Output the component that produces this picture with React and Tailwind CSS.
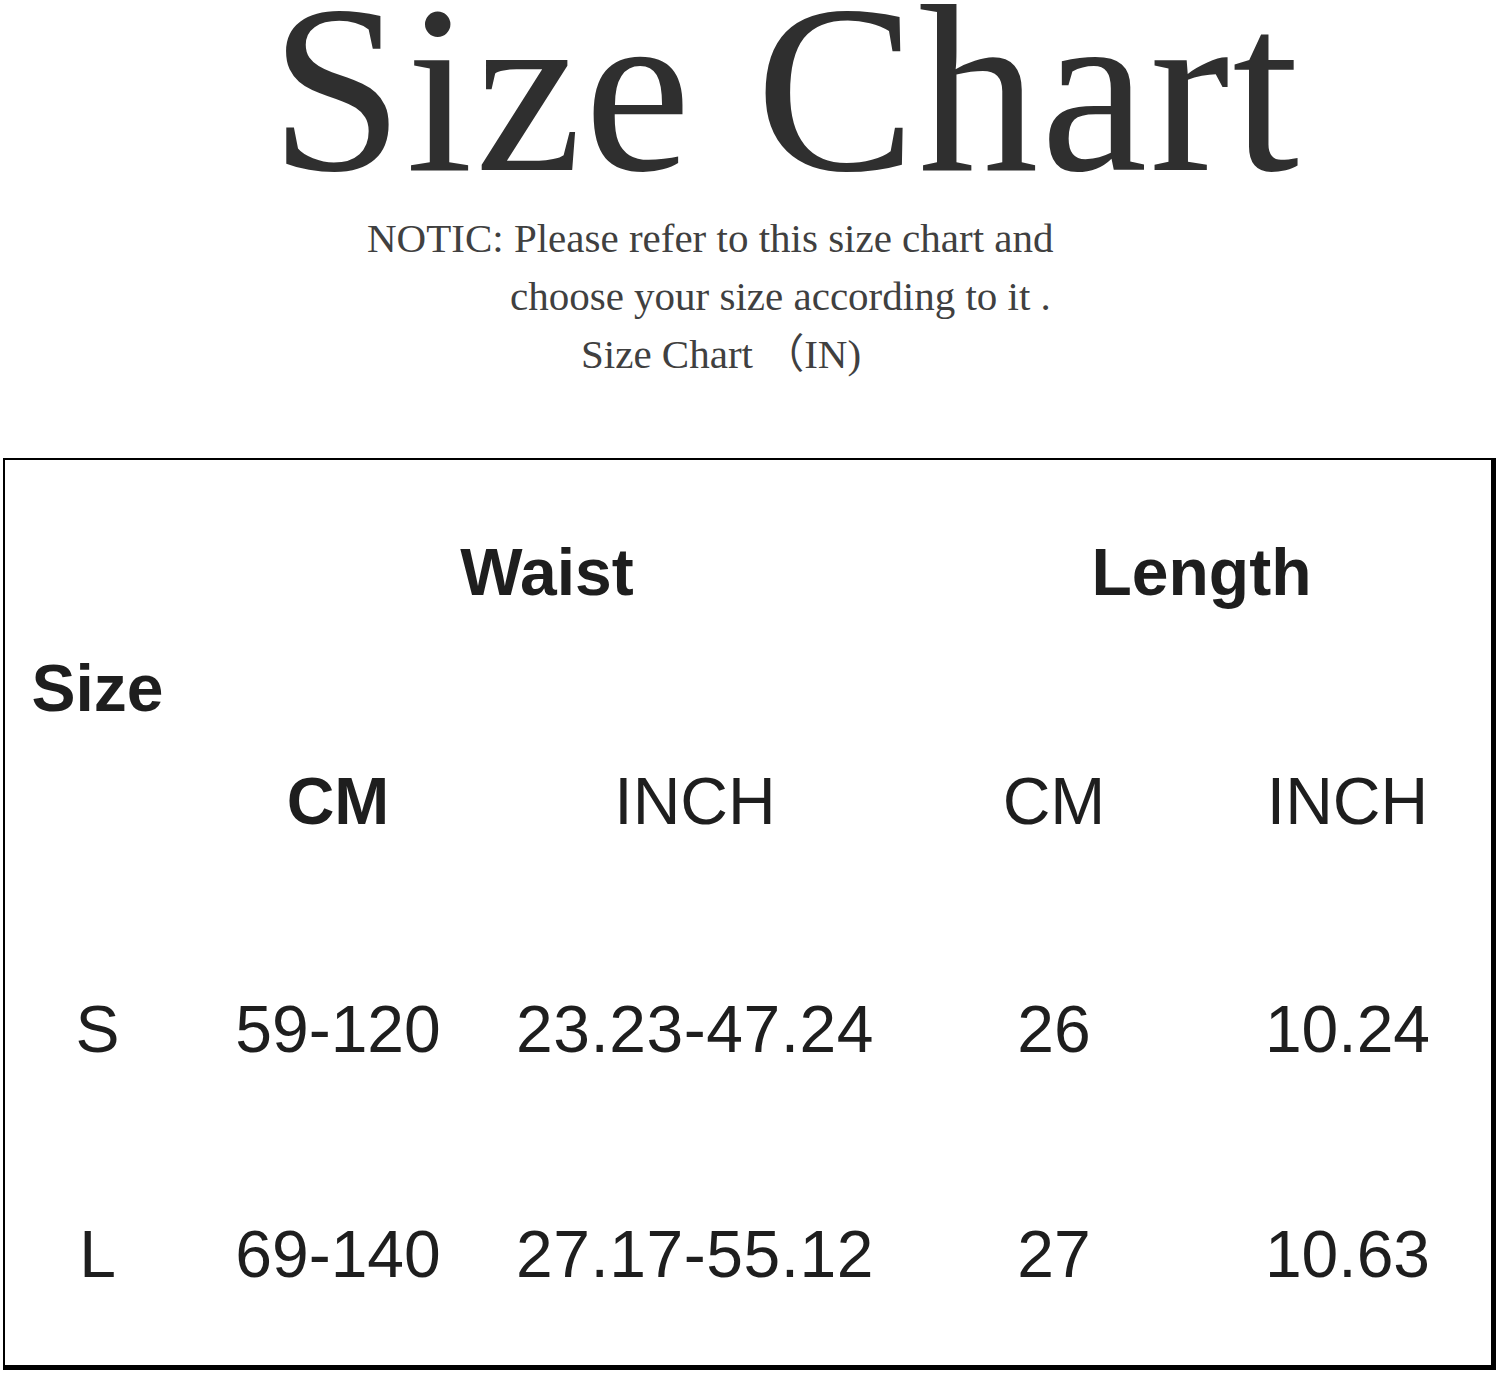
const serif = { fontFamily: '"Liberation Serif", "Noto Sans CJK SC", serif' };

const rows = [
  { size: 'S', waistCm: '59-120', waistIn: '23.23-47.24', lenCm: '26', lenIn: '10.24' },
  { size: 'L', waistCm: '69-140', waistIn: '27.17-55.12', lenCm: '27', lenIn: '10.63' },
];

const Cell = ({ children, className = '' }) => (
  <div className={`flex items-center justify-center ${className}`}>{children}</div>
);

const App = () => {
  return (
    <div className="w-[1500px] h-[1375px] bg-white overflow-hidden">
      {/* heading */}
      <div className="font-['Liberation_Serif',serif]">
        <div className="pl-[270px] text-[240px] leading-[178px] text-[#2f2f2f] whitespace-nowrap tracking-[2.5px]">
          Size Chart
        </div>
        <div className="mt-[31px] text-[41px] leading-[58px] text-[#404040] whitespace-nowrap">
          <div className="pl-[367px]">NOTIC: Please refer to this size chart and</div>
          <div className="pl-[510px]">choose your size according to it .</div>
          <div className="pl-[581px]" style={serif}>
            Size Chart （IN)
          </div>
        </div>
      </div>

      {/* table */}
      <div className="mt-[75px] ml-[3px] w-[1493px] h-[912px] border-t-2 border-l-2 border-r-[5px] border-b-[5px] border-black font-['Liberation_Sans',Arial,sans-serif] text-[66px] leading-none text-[#1e1e1e]">
        <div className="pt-[54px] grid grid-cols-[185px_296px_418px_300px_287px]">
          <div className="h-[116px]" />
          <Cell className="col-span-2 font-bold">Waist</Cell>
          <Cell className="col-span-2 pl-[8px] font-bold">Length</Cell>

          <Cell className="h-[116px] font-bold">Size</Cell>
          <div className="col-span-4" />

          <div className="h-[110px]" />
          <Cell className="font-bold">CM</Cell>
          <Cell>INCH</Cell>
          <Cell>CM</Cell>
          <Cell>INCH</Cell>

          <div className="col-span-5 h-[59px]" />

          {rows.map((r, i) => (
            <div key={r.size} className={`col-span-5 grid grid-cols-[185px_296px_418px_300px_287px] ${i === 0 ? 'h-[228px]' : 'h-[222px]'}`}>
              <Cell>{r.size}</Cell>
              <Cell>{r.waistCm}</Cell>
              <Cell className="tracking-[0.5px]">{r.waistIn}</Cell>
              <Cell>{r.lenCm}</Cell>
              <Cell>{r.lenIn}</Cell>
            </div>
          ))}
        </div>
      </div>
    </div>
  );
};

export default App;
